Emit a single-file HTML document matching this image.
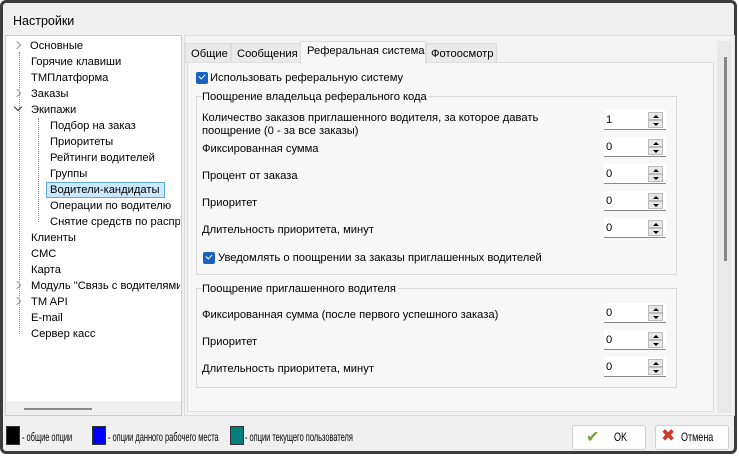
<!DOCTYPE html>
<html><head><meta charset="utf-8"><style>
*{box-sizing:border-box;margin:0;padding:0}
body{width:739px;height:457px;background:#fff;font-family:"Liberation Sans","DejaVu Sans",sans-serif;font-size:11.2px;color:#000;position:relative;overflow:hidden}
.a{position:absolute}
.win{left:0;top:0;width:737px;height:454px;background:#f0f0f0;border:3px solid #3c3c3c;border-radius:6px}
.t{position:absolute;white-space:nowrap;margin-top:2px}
.cb{position:absolute;width:12px;height:12px;background:#1a62c0;border-radius:2px}
.cb:after{content:"";position:absolute;left:3px;top:2px;width:5px;height:3px;border-left:1.5px solid #fff;border-bottom:1.5px solid #fff;transform:rotate(-45deg)}
.spin{position:absolute;width:62px;height:20px;background:#fff;border-bottom:1px solid #888}
.spin span{position:absolute;left:2px;top:4px}
.spin i{position:absolute;right:3px;width:15px;height:8px;background:#e8e8e8;border:1px solid #bbb}
.spin i:after{content:"";position:absolute;left:4px;top:2px;border-left:3px solid transparent;border-right:3px solid transparent}
.up{top:2px}.up:after{border-bottom:3px solid #000}
.dn{top:10px}.dn:after{border-top:3px solid #000}
.grp{position:absolute;border:1px solid #d8d8d8}
.leg{position:absolute;top:426px;width:14px;height:19px;border:1px solid #333}
.lt{position:absolute;top:430px;white-space:nowrap;font-size:12px;transform:scaleX(0.62);transform-origin:left}
.btn{position:absolute;top:425px;height:25px;background:#fdfdfd;border:1px solid #d0d0d0;border-radius:3px}
.dotv{position:absolute;border-left:1px dotted #888}
.chr{position:absolute;width:6px;height:6px;border-right:1.5px solid #999;border-bottom:1.5px solid #999;transform:rotate(-45deg)}
.chd{position:absolute;width:6px;height:6px;border-right:1.5px solid #333;border-bottom:1.5px solid #333;transform:rotate(45deg)}
</style></head><body>
<div class="a win"></div>
<div class="t" style="left:13px;top:12px;font-size:12.5px">Настройки</div>
<!-- tree -->
<div class="a" style="left:5px;top:35px;width:177px;height:381px;background:#fff;border:1px solid #ccc"></div>
<div class="a" style="left:6px;top:401px;width:175px;height:14px;background:#f0f0f0"></div>
<div class="a" style="left:24px;top:408px;width:68px;height:2px;background:#8a8a8a"></div>
<div class="dotv" style="left:19px;top:52px;height:282px"></div>
<div class="dotv" style="left:38px;top:118px;height:104px"></div>
<div class="chr" style="left:14px;top:42px"></div>
<div class="chr" style="left:14px;top:90px"></div>
<div class="chd" style="left:15px;top:104px"></div>
<div class="chr" style="left:14px;top:282px"></div>
<div class="chr" style="left:14px;top:298px"></div>
<div class="t" style="left:30px;top:38px">Основные</div>
<div class="t" style="left:31px;top:54px">Горячие клавиши</div>
<div class="t" style="left:31px;top:70px">ТМПлатформа</div>
<div class="t" style="left:31px;top:86px">Заказы</div>
<div class="t" style="left:31px;top:102px">Экипажи</div>
<div class="t" style="left:50px;top:118px">Подбор на заказ</div>
<div class="t" style="left:50px;top:134px">Приоритеты</div>
<div class="t" style="left:50px;top:150px">Рейтинги водителей</div>
<div class="t" style="left:50px;top:166px">Группы</div>
<div class="a" style="left:46px;top:182px;width:119px;height:16px;background:#cce8ff;border:1px solid #5fa8e0"></div>
<div class="t" style="left:50px;top:182px">Водители-кандидаты</div>
<div class="t" style="left:50px;top:198px">Операции по водителю</div>
<div class="t" style="left:50px;top:214px;width:130px;overflow:hidden">Снятие средств по распределению</div>
<div class="t" style="left:31px;top:230px">Клиенты</div>
<div class="t" style="left:31px;top:246px">СМС</div>
<div class="t" style="left:31px;top:262px">Карта</div>
<div class="t" style="left:31px;top:278px;width:149px;overflow:hidden">Модуль "Связь с водителями"</div>
<div class="t" style="left:31px;top:294px">TM API</div>
<div class="t" style="left:31px;top:310px">E-mail</div>
<div class="t" style="left:31px;top:326px">Сервер касс</div>
<!-- right panel -->
<div class="a" style="left:184px;top:35px;width:551px;height:381px;border:1px solid #ddd;background:#f3f3f3"></div>
<div class="a" style="left:717px;top:41px;width:15px;height:372px;background:#e9e9e9"></div>
<div class="a" style="left:724px;top:57px;width:3px;height:204px;background:#888"></div>
<div class="a" style="left:187px;top:62px;width:527px;height:350px;background:#f7f7f7;border:1px solid #ddd"></div>
<div class="a" style="left:185px;top:43px;width:46px;height:20px;background:#eaeaea;border:1px solid #ddd"></div>
<div class="t" style="left:191px;top:46px">Общие</div>
<div class="a" style="left:231px;top:43px;width:70px;height:20px;background:#eaeaea;border:1px solid #ddd"></div>
<div class="t" style="left:237px;top:46px">Сообщения</div>
<div class="a" style="left:300px;top:41px;width:126px;height:23px;background:#f7f7f7;border:1px solid #ddd;border-bottom:none"></div>
<div class="t" style="left:307px;top:43px">Реферальная система</div>
<div class="a" style="left:426px;top:43px;width:71px;height:20px;background:#eaeaea;border:1px solid #ddd"></div>
<div class="t" style="left:431px;top:46px">Фотоосмотр</div>
<div class="cb" style="left:196px;top:72px"></div>
<div class="t" style="left:210px;top:70px">Использовать реферальную систему</div>
<div class="grp" style="left:196px;top:96px;width:481px;height:179px"></div>
<div class="t" style="left:202px;top:89px;background:#f7f7f7;padding-right:2px">Поощрение владельца реферального кода</div>
<div class="t" style="left:202px;top:110px;line-height:13px">Количество заказов приглашенного водителя, за которое давать<br>поощрение (0 - за все заказы)</div>
<div class="t" style="left:202px;top:141px">Фиксированная сумма</div>
<div class="t" style="left:202px;top:168px">Процент от заказа</div>
<div class="t" style="left:202px;top:195px">Приоритет</div>
<div class="t" style="left:202px;top:222px">Длительность приоритета, минут</div>
<div class="spin" style="left:604px;top:110px"><span>1</span><i class="up"></i><i class="dn"></i></div>
<div class="spin" style="left:604px;top:137px"><span>0</span><i class="up"></i><i class="dn"></i></div>
<div class="spin" style="left:604px;top:164px"><span>0</span><i class="up"></i><i class="dn"></i></div>
<div class="spin" style="left:604px;top:191px"><span>0</span><i class="up"></i><i class="dn"></i></div>
<div class="spin" style="left:604px;top:218px"><span>0</span><i class="up"></i><i class="dn"></i></div>
<div class="cb" style="left:203px;top:252px"></div>
<div class="t" style="left:218px;top:250px">Уведомлять о поощрении за заказы приглашенных водителей</div>
<div class="grp" style="left:196px;top:288px;width:481px;height:100px"></div>
<div class="t" style="left:202px;top:281px;background:#f7f7f7;padding-right:2px">Поощрение приглашенного водителя</div>
<div class="t" style="left:202px;top:307px">Фиксированная сумма (после первого успешного заказа)</div>
<div class="t" style="left:202px;top:334px">Приоритет</div>
<div class="t" style="left:202px;top:361px">Длительность приоритета, минут</div>
<div class="spin" style="left:604px;top:303px"><span>0</span><i class="up"></i><i class="dn"></i></div>
<div class="spin" style="left:604px;top:330px"><span>0</span><i class="up"></i><i class="dn"></i></div>
<div class="spin" style="left:604px;top:357px"><span>0</span><i class="up"></i><i class="dn"></i></div>
<!-- legend -->
<div class="leg" style="left:6px;background:#000"></div>
<div class="lt" style="left:22px">- общие опции</div>
<div class="leg" style="left:92px;background:#0000ff"></div>
<div class="lt" style="left:108px">- опции данного рабочего места</div>
<div class="leg" style="left:230px;background:#007f7f"></div>
<div class="lt" style="left:245px">- опции текущего пользователя</div>
<div class="btn" style="left:572px;width:74px"></div>
<div class="t" style="left:586px;top:425px;color:#6aa536;font-size:16px">✔</div>
<div class="t" style="left:614px;top:428px;font-size:12px;transform:scaleX(0.75);transform-origin:left">OK</div>
<div class="btn" style="left:655px;width:74px"></div>
<div class="t" style="left:661px;top:424px;color:#d03a2a;font-size:17px;font-weight:bold">✖</div>
<div class="t" style="left:681px;top:428px;font-size:12px;transform:scaleX(0.75);transform-origin:left">Отмена</div>
</body></html>
